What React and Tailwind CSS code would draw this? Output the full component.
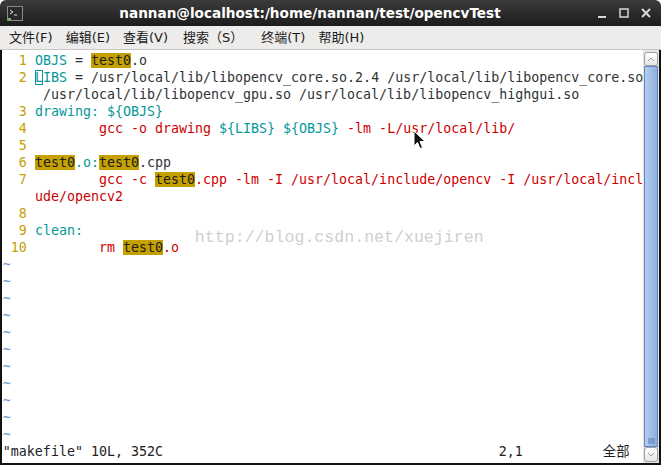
import React from 'react';

const mono = { fontFamily: '"DejaVu Sans Mono", "Liberation Mono", monospace' };
const cjk = { fontFamily: '"DejaVu Sans", "Noto Sans CJK SC", sans-serif' };

const C = {
  n: 'text-[#c4a000]',
  t: 'text-[#06989a]',
  r: 'text-[#cc0000]',
  d: 'text-[#2e3436]',
  h: 'bg-[#c4a000] text-[#1e1e1e]',
  c: 'text-[#06989a] outline outline-1 -outline-offset-1 outline-[#06989a]',
};

const lines = [
  [['  1 ', 'n'], ['OBJS', 't'], [' = ', 'd'], ['test0', 'h'], ['.o', 'd']],
  [['  2 ', 'n'], ['L', 'c'], ['IBS', 't'], [' = /usr/local/lib/libopencv_core.so.2.4 /usr/local/lib/libopencv_core.so', 'd']],
  [['    ', 'n'], [' /usr/local/lib/libopencv_gpu.so /usr/local/lib/libopencv_highgui.so', 'd']],
  [['  3 ', 'n'], ['drawing: ${OBJS}', 't']],
  [['  4 ', 'n'], ['        gcc -o drawing ', 'r'], ['${LIBS} ${OBJS}', 't'], [' -lm -L/usr/local/lib/', 'r']],
  [['  5 ', 'n']],
  [['  6 ', 'n'], ['test0', 'h'], ['.o:', 't'], ['test0', 'h'], ['.cpp', 'd']],
  [['  7 ', 'n'], ['        gcc -c ', 'r'], ['test0', 'h'], ['.cpp -lm -I /usr/local/include/opencv -I /usr/local/incl', 'r']],
  [['    ', 'n'], ['ude/opencv2', 'r']],
  [['  8 ', 'n']],
  [['  9 ', 'n'], ['clean:', 't']],
  [[' 10 ', 'n'], ['        rm ', 'r'], ['test0', 'h'], ['.o', 'r']],
];

const menus = ['文件(F)', '编辑(E)', '查看(V)', '搜索（S）', '终端(T)', '帮助(H)'];

function TitleBar() {
  return (
    <div className="relative h-[26px] rounded-t-[6px] bg-gradient-to-b from-[#3c3c3c] to-[#1c1c1c] flex items-center">
      <div className="ml-[7px] w-[16px] h-[15px] border border-[#8a8a8a] bg-[#2a2a2a] relative">
        <svg width="14" height="13" viewBox="0 0 14 13" className="absolute left-0 top-0">
          <path d="M2 3 L5 5 L2 7" stroke="#e0e0e0" strokeWidth="1" fill="none" />
          <path d="M6 8 H9" stroke="#e0e0e0" strokeWidth="1" />
          <rect x="0" y="11" width="3" height="2" fill="#6cc04a" />
        </svg>
      </div>
      <div className="flex-1 text-center text-white font-bold text-[13.6px]" style={{ fontFamily: '"DejaVu Sans", sans-serif' }}>
        nannan@localhost:/home/nannan/test/opencvTest
      </div>
      <div className="flex items-center gap-[12px] mr-[10px]">
        <svg width="10" height="10" viewBox="0 0 10 10"><rect x="1" y="8" width="8" height="2" fill="#d8d8d8" /></svg>
        <svg width="10" height="10" viewBox="0 0 10 10"><rect x="1" y="1" width="8" height="8" stroke="#d8d8d8" strokeWidth="1.5" fill="none" /></svg>
        <svg width="10" height="10" viewBox="0 0 10 10"><path d="M1 1 L9 9 M9 1 L1 9" stroke="#d8d8d8" strokeWidth="2" /></svg>
      </div>
    </div>
  );
}

function MenuBar() {
  return (
    <div className="h-[24px] bg-[#edeceb] border-b border-[#c9c8c6] flex items-center text-[13px] text-[#1a1a1a]" style={cjk}>
      {menus.map((m, i) => (
        <span key={i} className={i === 0 ? 'ml-[9px]' : i === 4 ? 'ml-[18px]' : i === 3 ? 'ml-[15px]' : 'ml-[13px]'}>{m}</span>
      ))}
    </div>
  );
}

function Scrollbar() {
  return (
    <div className="w-[17px] bg-[#e4e4e4] flex flex-col pt-[2px] pb-[1px] px-[1px]">
      <div className="h-[14px] bg-gradient-to-b from-white to-[#e6e6e6] border border-[#a0a0a0] rounded-[3px] flex items-center justify-center">
        <svg width="8" height="5" viewBox="0 0 8 5"><path d="M1 4 L4 1 L7 4" stroke="#9a9a9a" fill="none" /></svg>
      </div>
      <div className="flex-1 bg-gradient-to-r from-[#b6cdee] to-[#8eb0df] border border-[#6487bd] flex items-end justify-center pb-[2px]">
        <svg width="7" height="6" viewBox="0 0 7 6"><path d="M0 1 H7 M0 3 H7 M0 5 H7" stroke="#5a7fb6" strokeWidth="1" /></svg>
      </div>
      <div className="h-[15px] bg-gradient-to-b from-white to-[#e6e6e6] border border-[#a0a0a0] rounded-[3px] flex items-center justify-center">
        <svg width="8" height="5" viewBox="0 0 8 5"><path d="M1 1 L4 4 L7 1" stroke="#9a9a9a" fill="none" /></svg>
      </div>
    </div>
  );
}

export default function App() {
  const tildes = Array.from({ length: 11 });
  return (
    <div className="w-[661px] h-[465px] bg-white overflow-hidden">
      <div className="w-full h-full flex flex-col">
        <TitleBar />
        <MenuBar />
        <div className="flex-1 flex bg-[#111] pb-[2px]">
          <div className="w-[2px]" />
          <div className="relative flex-1 bg-white pt-[2px] pl-[1px] text-[13.3px] leading-[17px] whitespace-pre" style={mono}>
            {lines.map((segs, i) => (
              <div key={i} className="h-[17px]">
                {segs.map(([txt, k], j) => (
                  <span key={j} className={C[k]}>{txt}</span>
                ))}
              </div>
            ))}
            {tildes.map((_, i) => (
              <div key={'t' + i} className="h-[17px] text-[#6f99d0]">~</div>
            ))}
            <div className="h-[17px] flex text-[#1e1e1e]">
              <span className="w-[496px]">"makefile" 10L, 352C</span>
              <span className="w-[104px]">2,1</span>
              <span style={cjk}>全部</span>
            </div>
            <div className="absolute left-[193px] top-[179px] text-[16.6px] text-[#cfcfcf]" style={{ fontFamily: '"Liberation Mono", monospace' }}>
              http://blog.csdn.net/xuejiren
            </div>
            <svg className="absolute left-[411px] top-[80px]" width="13" height="20" viewBox="0 0 13 20">
              <path d="M1 1 L1 16 L4.5 12.5 L7 18.5 L9.5 17.5 L7 11.5 L12 11.5 Z" fill="#111" stroke="#fff" strokeWidth="1" />
            </svg>
          </div>
          <Scrollbar />
          <div className="w-[2px]" />
        </div>
      </div>
    </div>
  );
}
